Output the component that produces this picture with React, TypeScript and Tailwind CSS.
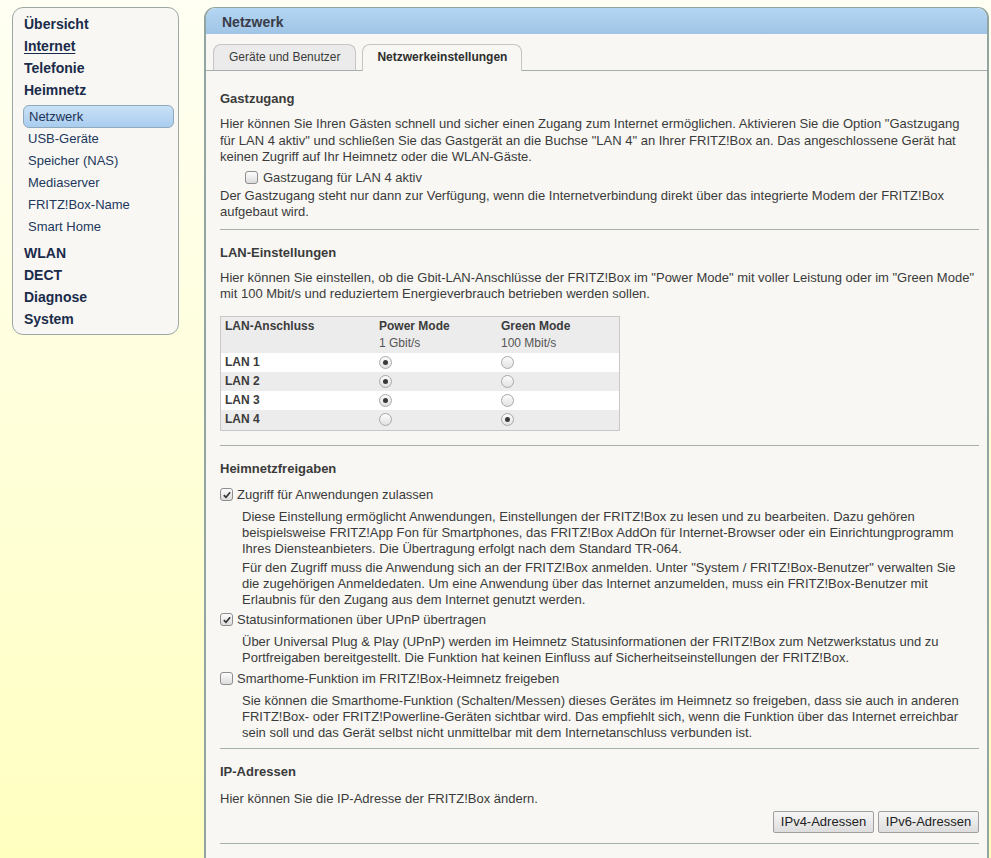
import type { ReactNode } from "react";

const mainNav = ["Übersicht", "Internet", "Telefonie", "Heimnetz"];
const subNav = ["Netzwerk", "USB-Geräte", "Speicher (NAS)", "Mediaserver", "FRITZ!Box-Name", "Smart Home"];
const bottomNav = ["WLAN", "DECT", "Diagnose", "System"];

const lanRows = [
  { name: "LAN 1", power: true },
  { name: "LAN 2", power: true },
  { name: "LAN 3", power: true },
  { name: "LAN 4", power: false },
];

function Checkbox({ checked }: { checked?: boolean }) {
  return (
    <span className="relative inline-flex h-[13px] w-[13px] shrink-0 items-center justify-center rounded-[3px] border border-[#8e8e8e] bg-linear-to-b from-[#fdfdfd] to-[#dcdcdc]">
      {checked && (
        <svg viewBox="0 0 12 12" className="h-[10px] w-[10px]">
          <path d="M2.2 6.2 L4.8 8.8 L9.8 2.8" fill="none" stroke="#333" strokeWidth="2" />
        </svg>
      )}
    </span>
  );
}

function Radio({ checked }: { checked?: boolean }) {
  return (
    <span className="inline-flex h-[13px] w-[13px] items-center justify-center rounded-full border border-[#a8a8a8] bg-linear-to-b from-[#fcfcfc] to-[#e2e2e2]">
      {checked && <span className="h-[5px] w-[5px] rounded-full bg-[#3a3a3a]" />}
    </span>
  );
}

function Heading({ children, className = "" }: { children: ReactNode; className?: string }) {
  return <h2 className={`font-bold leading-[16px] ${className}`}>{children}</h2>;
}

function Separator({ className = "" }: { className?: string }) {
  return <div className={`h-px bg-[#a6afac] ${className}`} />;
}

function CheckRow({ checked, children, className = "" }: { checked?: boolean; children: ReactNode; className?: string }) {
  return (
    <label className={`flex h-[18px] items-center gap-[4px] ${className}`}>
      <Checkbox checked={checked} />
      <span>{children}</span>
    </label>
  );
}

function Sidebar() {
  return (
    <nav className="flex h-[328px] w-[167px] shrink-0 flex-col rounded-[11px] border border-[#9ba8a5] bg-[#f8f7f3] pt-[5px] pl-[10px] pr-[4px] text-[#1a2b4b]">
      {mainNav.map((item) => (
        <a
          key={item}
          className={`flex h-[22px] items-center pl-[1px] text-[14px] font-bold ${item === "Internet" ? "underline underline-offset-2" : ""}`}
        >
          {item}
        </a>
      ))}
      <div className="mt-[4px] mb-[4px] flex flex-col">
        {subNav.map((item) =>
          item === "Netzwerk" ? (
            <a
              key={item}
              className="flex h-[23px] items-center rounded-[6px] border border-[#8fa9bd] bg-linear-to-b from-[#c9e1f6] to-[#a9cdef] pl-[5px] text-[13px] text-[#1d3358]"
            >
              {item}
            </a>
          ) : (
            <a key={item} className="flex h-[22px] items-center pl-[5px] text-[13px] text-[#22385c]">
              {item}
            </a>
          )
        )}
      </div>
      {bottomNav.map((item) => (
        <a key={item} className="flex h-[22px] items-center pl-[1px] text-[14px] font-bold">
          {item}
        </a>
      ))}
    </nav>
  );
}

function LanTable() {
  return (
    <div className="mt-[13px] w-[400px] border border-[#c8c8c8] bg-[#ececec] pt-px pb-px text-[12px]">
      <div className="flex pb-px leading-[17px]">
        <div className="w-[158px] pl-[4px] font-bold">LAN-Anschluss</div>
        <div className="w-[122px]">
          <div className="font-bold">Power Mode</div>
          <div className="text-[#555]">1 Gbit/s</div>
        </div>
        <div>
          <div className="font-bold">Green Mode</div>
          <div className="text-[#555]">100 Mbit/s</div>
        </div>
      </div>
      {lanRows.map((row, i) => (
        <div key={row.name} className={`flex h-[19px] items-center ${i % 2 === 0 ? "bg-white" : "bg-[#ececec]"}`}>
          <div className="flex w-[158px] items-center pl-[4px] font-bold">{row.name}</div>
          <div className="flex w-[122px] items-center">
            <Radio checked={row.power} />
          </div>
          <div className="flex items-center">
            <Radio checked={!row.power} />
          </div>
        </div>
      ))}
    </div>
  );
}

export default function App() {
  return (
    <div className="flex h-screen gap-[25px] overflow-hidden bg-linear-to-b from-[#fffff3] to-[#ffffc0] pt-[7px] pl-[12px] pr-[2px] font-['Liberation_Sans',Arial,sans-serif] text-[13px] text-[#3b3b3b]">
      <Sidebar />

      <main className="flex min-w-0 flex-1 flex-col self-start rounded-t-[11px] border border-x-2 border-[#93a5a1] bg-[#f8f7f3]">
        <div className="flex h-[26px] items-center rounded-t-[10px] bg-linear-to-b from-[#b3d6f3] to-[#a0c4e5] pt-[2px] pl-[16px] text-[14px] font-bold text-[#3a3b48]">
          Netzwerk
        </div>

        {/* tab bar */}
        <div className="flex gap-[6px] border-b border-[#a6afac] pt-[10px] pl-[7px] text-[12px]">
          <div className="flex h-[26px] items-center rounded-t-[8px] border border-b-0 border-[#c5c5c5] bg-[#ebebeb] px-[15px] pb-[2px] text-[#3b3b3b]">
            Geräte und Benutzer
          </div>
          <div className="-mb-px flex h-[27px] items-center rounded-t-[8px] border border-b-0 border-[#c5c5c5] bg-[#f8f7f3] px-[14px] pb-[3px] font-bold text-[#2e2e2e]">
            Netzwerkeinstellungen
          </div>
        </div>

        <div className="flex flex-col pl-[14px] pr-[8px] pb-[40px]">
          <Heading className="mt-[20px]">Gastzugang</Heading>
          <p className="mt-[9px] leading-[16.5px]">
            Hier können Sie Ihren Gästen schnell und sicher einen Zugang zum Internet ermöglichen. Aktivieren Sie die Option "Gastzugang
            <br />
            für LAN 4 aktiv" und schließen Sie das Gastgerät an die Buchse "LAN 4" an Ihrer FRITZ!Box an. Das angeschlossene Gerät hat
            <br />
            keinen Zugriff auf Ihr Heimnetz oder die WLAN-Gäste.
          </p>
          <CheckRow className="mt-[3px] ml-[25px] gap-[5px]">Gastzugang für LAN 4 aktiv</CheckRow>
          <p className="mt-px leading-[16px]">
            Der Gastzugang steht nur dann zur Verfügung, wenn die Internetverbindung direkt über das integrierte Modem der FRITZ!Box
            <br />
            aufgebaut wird.
          </p>
          <Separator className="mt-[9px]" />

          <Heading className="mt-[15px]">LAN-Einstellungen</Heading>
          <p className="mt-[9px] leading-[16.5px]">
            Hier können Sie einstellen, ob die Gbit-LAN-Anschlüsse der FRITZ!Box im "Power Mode" mit voller Leistung oder im "Green Mode"
            <br />
            mit 100 Mbit/s und reduziertem Energieverbrauch betrieben werden sollen.
          </p>
          <LanTable />
          <Separator className="mt-[14px]" />

          <Heading className="mt-[15px]">Heimnetzfreigaben</Heading>
          <CheckRow checked className="mt-[9px]">Zugriff für Anwendungen zulassen</CheckRow>
          <div className="ml-[22px] flex flex-col gap-[3px] leading-[16px]">
            <p className="mt-[5px]">
              Diese Einstellung ermöglicht Anwendungen, Einstellungen der FRITZ!Box zu lesen und zu bearbeiten. Dazu gehören
              <br />
              beispielsweise FRITZ!App Fon für Smartphones, das FRITZ!Box AddOn für Internet-Browser oder ein Einrichtungprogramm
              <br />
              Ihres Diensteanbieters. Die Übertragung erfolgt nach dem Standard TR-064.
            </p>
            <p>
              Für den Zugriff muss die Anwendung sich an der FRITZ!Box anmelden. Unter "System / FRITZ!Box-Benutzer" verwalten Sie
              <br />
              die zugehörigen Anmeldedaten. Um eine Anwendung über das Internet anzumelden, muss ein FRITZ!Box-Benutzer mit
              <br />
              Erlaubnis für den Zugang aus dem Internet genutzt werden.
            </p>
          </div>
          <CheckRow checked className="mt-[3px]">Statusinformationen über UPnP übertragen</CheckRow>
          <p className="mt-[5px] ml-[22px] leading-[16px]">
            Über Universal Plug &amp; Play (UPnP) werden im Heimnetz Statusinformationen der FRITZ!Box zum Netzwerkstatus und zu
            <br />
            Portfreigaben bereitgestellt. Die Funktion hat keinen Einfluss auf Sicherheitseinstellungen der FRITZ!Box.
          </p>
          <CheckRow className="mt-[4px]">Smarthome-Funktion im FRITZ!Box-Heimnetz freigeben</CheckRow>
          <p className="mt-[5px] ml-[22px] leading-[16px]">
            Sie können die Smarthome-Funktion (Schalten/Messen) dieses Gerätes im Heimnetz so freigeben, dass sie auch in anderen
            <br />
            FRITZ!Box- oder FRITZ!Powerline-Geräten sichtbar wird. Das empfiehlt sich, wenn die Funktion über das Internet erreichbar
            <br />
            sein soll und das Gerät selbst nicht unmittelbar mit dem Internetanschluss verbunden ist.
          </p>
          <Separator className="mt-[7px]" />

          <Heading className="mt-[15px]">IP-Adressen</Heading>
          <p className="mt-[11px] leading-[16px]">Hier können Sie die IP-Adresse der FRITZ!Box ändern.</p>
          <div className="mt-[4px] flex justify-end gap-[4px]">
            <button className="h-[22px] w-[101px] rounded-[2px] border border-[#9f9f9f] bg-linear-to-b from-[#f6f6f6] to-[#dddddd] text-[13px] text-[#222]">
              IPv4-Adressen
            </button>
            <button className="h-[22px] w-[101px] rounded-[2px] border border-[#9f9f9f] bg-linear-to-b from-[#f6f6f6] to-[#dddddd] text-[13px] text-[#222]">
              IPv6-Adressen
            </button>
          </div>
          <Separator className="mt-[10px]" />
        </div>
      </main>
    </div>
  );
}
